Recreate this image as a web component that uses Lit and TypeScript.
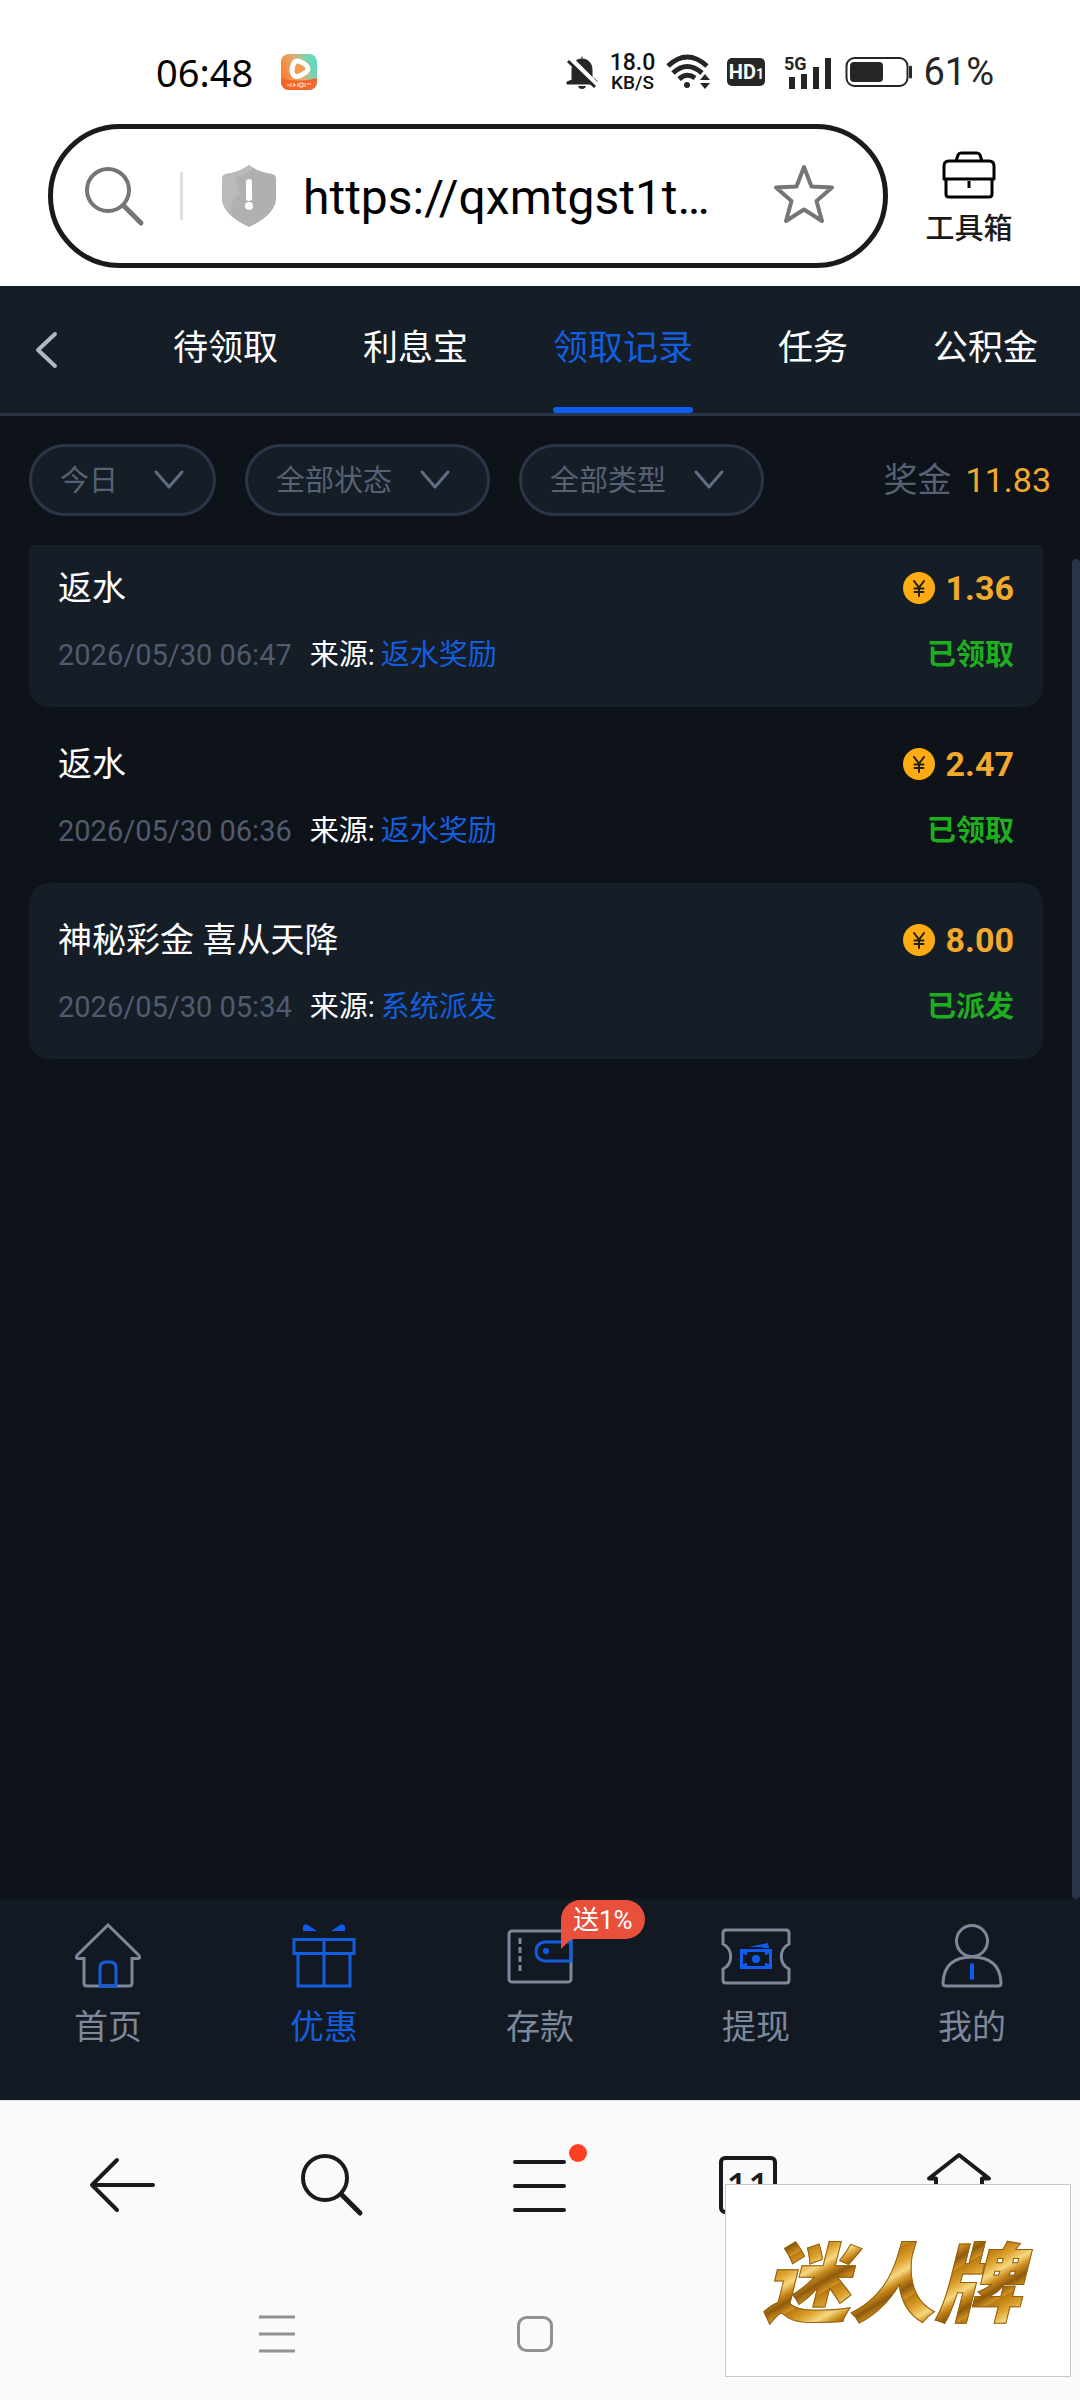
import { LitElement, html, svg, css, nothing } from "lit";
import { customElement, property, state } from "lit/decorators.js";
import { classMap } from "lit/directives/class-map.js";

const base = css`
  * {
    box-sizing: border-box;
  }
  button,
  input,
  select {
    margin: 0;
    padding: 0;
    border: 0;
    background: none;
    color: inherit;
    font: inherit;
  }
  button {
    cursor: pointer;
  }
  svg {
    display: block;
    flex: none;
    fill: none;
    overflow: visible;
  }
  ul {
    margin: 0;
    padding: 0;
    list-style: none;
  }
`;

@customElement("status-bar")
class StatusBar extends LitElement {
  static styles = [
    base,
    css`
      :host {
        display: flex;
        align-items: center;
        justify-content: space-between;
        padding: 48px 86px 28px 156px;
        height: 124px;
        box-sizing: border-box;
        color: #000;
      }
      .left,
      .right {
        display: flex;
        align-items: center;
      }
      .left {
        gap: 28px;
      }
      .right {
        gap: 10px;
        color: #262626;
      }
      .time {
        font: 38px/48px "Noto Sans", sans-serif;
      }
      .speed {
        display: flex;
        flex-direction: column;
        align-items: center;
        width: 50px;
        font-weight: 500;
        color: #111;
      }
      .rate {
        font-size: 23px;
        line-height: 21px;
      }
      .unit {
        font-size: 19px;
        line-height: 19px;
      }
      .hd {
        display: flex;
        align-items: baseline;
        justify-content: center;
        width: 38px;
        height: 28px;
        border-radius: 5px;
        background: #262626;
        color: #fff;
        font: bold 20px/28px Roboto, sans-serif;
      }
      .sim {
        font-size: 14px;
      }
      .percent {
        font-size: 38px;
        line-height: 48px;
      }
      .net {
        font: bold 18px Roboto, sans-serif;
      }
    `,
  ];

  render() {
    return html`
      <div class="left">
        <span class="time">06:48</span>
        <svg width="36" height="36" viewBox="0 0 36 36">
          <defs>
            <linearGradient id="app" x1="0" y1="0.6" x2="1" y2="0.2">
              <stop offset="0" stop-color="#ff7a30" />
              <stop offset="0.5" stop-color="#e0b070" />
              <stop offset="0.8" stop-color="#6fd6b4" />
              <stop offset="1" stop-color="#5fd8c0" />
            </linearGradient>
            <clipPath id="round"><rect width="36" height="36" rx="8" /></clipPath>
          </defs>
          <g clip-path="url(#round)">
            <rect width="36" height="36" fill="url(#app)" />
            <path d="M0 24Q18 29 36 24V36H0Z" fill="#f4672a" />
          </g>
          <path d="M13 9Q15 6 19 7.500Q27 11 27 15Q27 18 18 22Q12 24 11 17Q11 12 13 9Z" stroke="#fff" stroke-width="5" fill="#f09a50" stroke-linejoin="round" />
          <path d="M6 31h3m1-2v4m3-4v4m-1-2h3m2-2v4m2-4h3v4h-3zm5 0v4m2-3h4" stroke="#ffe6d6" stroke-width="1" />
        </svg>
      </div>
      <div class="right">
        <svg width="30" height="34" viewBox="0 0 30 34">
          <path d="M15 1.500v3M5 25V15C5 8 9 4 15 4s10 4 10 11v7l5 4v3H0v-2z" fill="#262626" stroke="#262626" />
          <path d="M11 31h8q-1 3-4 3t-4-3z" fill="#262626" />
          <path d="M3 3L31 31" stroke="#fff" stroke-width="5" />
          <path d="M1 6L28 32" stroke="#262626" stroke-width="3" />
        </svg>
        <div class="speed"><span class="rate">18.0</span><span class="unit">KB/S</span></div>
        <svg width="50" height="36" viewBox="0 0 50 36" stroke="#262626" stroke-width="5">
          <path d="M1 12Q20-6 40 12M6 19Q20 6 35 19M12 25Q20 18 28 24" />
          <circle cx="20" cy="31" r="3" fill="#262626" stroke="none" />
          <path d="M33 26l5-6 5 6zM33 29h10l-5 6z" fill="#262626" stroke="none" />
        </svg>
        <span class="hd">HD<span class="sim">1</span></span>
        <svg width="60" height="36" viewBox="-8 0 60 36">
          <text class="net" x="1" y="16" fill="#262626">5G</text>
          <path d="M9 23v12M21 20v15M33 13v22M45 4v31" stroke="#262626" stroke-width="6" />
        </svg>
        <svg width="68" height="32" viewBox="0 0 68 32">
          <rect x="1.500" y="2" width="61" height="28" rx="8" stroke="#262626" stroke-width="2" />
          <rect x="5" y="6" width="33" height="20" rx="4" fill="#262626" />
          <path d="M65.500 11v10" stroke="#262626" stroke-width="3" stroke-linecap="round" />
        </svg>
        <span class="percent">61%</span>
      </div>
    `;
  }
}

@customElement("address-bar")
class AddressBar extends LitElement {
  static styles = [
    base,
    css`
      :host {
        display: flex;
        align-items: center;
        padding: 0 56px 18px 48px;
        gap: 26px;
      }
      .box {
        flex: 1;
        min-width: 0;
        display: flex;
        align-items: center;
        height: 144px;
        padding: 0 48px 0 32px;
        border: 5px solid #1a1a1a;
        border-radius: 72px;
      }
      .divider {
        width: 3px;
        height: 48px;
        margin: 0 39px 0 37px;
        background: #e0e0e0;
      }
      .url {
        flex: 1;
        min-width: 0;
        margin-left: 27px;
        height: 64px;
        padding-top: 2px;
        font-size: 48px;
        line-height: 62px;
        color: #000;
        outline: none;
      }
      .tools {
        display: flex;
        flex-direction: column;
        align-items: center;
        width: 110px;
        gap: 12px;
        padding-top: 6px;
        font-size: 29px;
        line-height: 36px;
        font-weight: 500;
        color: #1a1a1a;
      }
    `,
  ];

  render() {
    return html`
      <div class="box">
        <svg width="58" height="60" viewBox="0 0 58 60" stroke="#757575" stroke-linecap="round">
          <circle cx="23" cy="24" r="21" stroke-width="4" />
          <path d="M39 40L56 57" stroke-width="5" />
        </svg>
        <span class="divider"></span>
        <svg width="54" height="62" viewBox="0 0 54 62">
          <path d="M27 0Q36 7 50 9Q54 10 54 14V34Q53 50 27 62Q1 50 0 34V14Q0 10 4 9Q18 7 27 0Z" fill="#b0b0b0" />
          <path d="M13 12Q26 9 31 3L27 0Q18 7 4 9Q0 10 0 14V34Q2 45 10 51Q6 36 18 30Z" fill="#bababa" />
          <path d="M27 17v16" stroke="#fff" stroke-width="6" stroke-linecap="round" />
          <circle cx="27" cy="41" r="4" fill="#fff" />
        </svg>
        <input class="url" type="text" aria-label="URL" .value=${"https://qxmtgst1t…"} />
        <svg width="62" height="62" viewBox="0 0 62 62" stroke="#757575" stroke-width="4" stroke-linejoin="round">
          <path d="M31 2L38.500 21.500L59 22.500L43.500 36L49 56L31 44.500L13 56L18.500 36L3 22.500L23.500 21.500Z" />
        </svg>
      </div>
      <button class="tools">
        <svg width="54" height="48" viewBox="0 0 54 48" stroke="#000" stroke-width="3" stroke-linejoin="round">
          <path d="M14 10L16 4Q17 2 19 2H35Q37 2 38 4L40 10M7 10H47Q52 10 52 15V28H2V15Q2 10 7 10ZM4 28V43Q4 46 7 46H47Q50 46 50 43V28M27 30v7" />
        </svg>
        工具箱
      </button>
    `;
  }
}

@customElement("record-tabs")
class RecordTabs extends LitElement {
  static styles = [
    base,
    css`
      :host {
        display: flex;
        background: #151d27;
        border-bottom: 3px solid #2a3648;
      }
      .back {
        display: flex;
        align-items: center;
        width: 173px;
        padding-left: 35px;
      }
      .tabs {
        flex: 1;
        display: flex;
        justify-content: space-between;
        padding-right: 42px;
      }
      .tab {
        display: flex;
        flex-direction: column;
        padding-top: 5px;
        color: #fff;
        font-size: 35px;
        line-height: 116px;
      }
      .tab::after {
        content: "";
        height: 6px;
        border-radius: 3px;
      }
      .active {
        color: #135edf;
      }
      .active::after {
        background: #0f5df0;
      }
    `,
  ];

  @state() private active = "领取记录";

  render() {
    return html`
      <button class="back" aria-label="返回">
        <svg width="24" height="38" viewBox="0 0 24 38" stroke="#b0b7c9" stroke-width="4" stroke-linecap="round" stroke-linejoin="round">
          <path d="M20 3L3 19L20 35" />
        </svg>
      </button>
      <nav class="tabs">
        ${["待领取", "利息宝", "领取记录", "任务", "公积金"].map(
          (name) => html`<button class=${classMap({ tab: true, active: name === this.active })} @click=${() => (this.active = name)}>
            <span>${name}</span>
          </button>`
        )}
      </nav>
    `;
  }
}

@customElement("record-filters")
class RecordFilters extends LitElement {
  static styles = [
    base,
    css`
      :host {
        display: flex;
        align-items: center;
        gap: 29px;
        padding: 28px 29px 29px;
        color: #566174;
      }
      .pill {
        display: flex;
        align-items: center;
        gap: 27px;
        height: 72px;
        padding: 0 37px 0 28px;
        border: 3px solid #2a3648;
        border-radius: 36px;
        background: #151d27;
      }
      .compact {
        gap: 35px;
        padding-right: 29px;
      }
      .choice {
        appearance: none;
        padding-top: 2px;
        font-size: 29px;
        line-height: 40px;
        outline: none;
      }
      .bonus {
        display: flex;
        gap: 14px;
        margin-left: auto;
        font-size: 34px;
        line-height: 48px;
      }
      .sum {
        color: #f3a92c;
      }
    `,
  ];

  render() {
    return html`
      ${["今日", "全部状态", "全部类型"].map(
        (name) => html`<label class=${classMap({ pill: true, compact: name.length < 3 })}>
          <select class="choice" aria-label=${name}>
            <option>${name}</option>
          </select>
          <svg width="30" height="20" viewBox="0 0 30 20" stroke="#616d82" stroke-width="3" stroke-linecap="round" stroke-linejoin="round">
            <path d="M2 2L15 17L28 2" />
          </svg>
        </label>`
      )}
      <div class="bonus"><span>奖金</span><span class="sum">11.83</span></div>
    `;
  }
}

interface RewardRecord {
  title: string;
  time: string;
  source: string;
  amount: string;
  status: string;
}

const records: RewardRecord[] = [
  { title: "返水", time: "2026/05/30 06:47", source: "返水奖励", amount: "1.36", status: "已领取" },
  { title: "返水", time: "2026/05/30 06:36", source: "返水奖励", amount: "2.47", status: "已领取" },
  { title: "神秘彩金 喜从天降", time: "2026/05/30 05:34", source: "系统派发", amount: "8.00", status: "已派发" },
];

@customElement("record-list")
class RecordList extends LitElement {
  static styles = [
    base,
    css`
      :host {
        display: flex;
        overflow: hidden;
        padding-left: 29px;
      }
      /* The list is scrolled slightly under the filter row. */
      .list {
        flex: 1;
        margin: -14px 29px 0 0;
      }
      .card {
        display: flex;
        flex-direction: column;
        gap: 22px;
        padding: 33px 29px 31px;
        border-radius: 20px;
      }
      .card:nth-child(odd) {
        background: #151d27;
      }
      .row {
        display: flex;
        align-items: center;
        justify-content: space-between;
      }
      .main {
        font-size: 34px;
        line-height: 48px;
        color: #fff;
      }
      .sub {
        font-size: 29px;
        line-height: 42px;
      }
      .amount {
        display: flex;
        align-items: center;
        gap: 11px;
        color: #f3a92c;
        font-weight: bold;
      }
      .meta {
        display: flex;
      }
      .time {
        margin-right: 18px;
        color: #515b6e;
      }
      .label {
        margin-right: 6px;
        color: #fff;
      }
      .source {
        color: #135edf;
        text-decoration: none;
      }
      .status {
        color: #1eae1e;
        font-weight: bold;
      }
      .thumb {
        width: 8px;
        margin-top: 14px;
        border-radius: 4px;
        background: #283548;
      }
    `,
  ];

  render() {
    return html`
      <ul class="list">
        ${records.map(
          (r) => html`<li class="card">
            <div class="row main">
              <span>${r.title}</span>
              <span class="amount">
                <svg width="32" height="32" viewBox="0 0 32 32">
                  <circle cx="16" cy="16" r="16" fill="#ffab12" />
                  <path d="M11 9L16 15.500L21 9M16 15.500V24M11.500 16.500H20.500M11.500 20H20.500" stroke="#20201c" stroke-width="2" stroke-linecap="round" />
                </svg>
                ${r.amount}
              </span>
            </div>
            <div class="row sub">
              <span class="meta">
                <span class="time">${r.time}</span><span class="label">来源:</span><a class="source" href="#">${r.source}</a>
              </span>
              <span class="status">${r.status}</span>
            </div>
          </li>`
        )}
      </ul>
      <div class="thumb"></div>
    `;
  }
}

const navItems = [
  {
    label: "首页",
    icon: svg`<path d="M37 4L68 34.500Q70 38 66 37.500H61V62Q61 65 58 65H16Q13 65 13 62V37.500H8Q4 38 6 34.500Z" stroke="#7d889b" />
      <path d="M29 65V47Q29 41 35 41H39Q45 41 45 47V65Z" stroke="#135edf" />`,
  },
  {
    label: "优惠",
    active: true,
    icon: svg`<path d="M16 10V6Q17 2 21 4L30 10ZM58 10V6Q57 2 53 4L44 10Z" fill="#0f5df0" stroke="none" />
      <path d="M7 18.500H67V32.500H7ZM11 32.500V65H63V32.500M37 18.500V65" stroke="#135edf" />`,
  },
  {
    label: "存款",
    badge: "送1%",
    icon: svg`<rect x="6" y="10" width="62" height="51" rx="3" stroke="#7d889b" />
      <path d="M17 17v35" stroke="#7d889b" stroke-dasharray="6 3" />
      <path d="M68 21H42Q33 22 33 30.500Q33 39 42 40H68Z" stroke="#135edf" />
      <circle cx="43" cy="30" r="3" fill="#0f5df0" stroke="none" />`,
  },
  {
    label: "提现",
    icon: svg`<path d="M7 9H67Q70 9 70 12V23A14 14 0 0 0 70 48V59Q70 62 67 62H7Q4 62 4 59V48A14 14 0 0 0 4 23V12Q4 9 7 9Z" stroke="#7d889b" />
      <rect x="22.500" y="29.500" width="29" height="17" stroke="#0f5df0" />
      <circle cx="37" cy="38" r="4" fill="#0f5df0" stroke="none" />
      <path d="M30 26L49 22L50 27H44L43 26Z" fill="#0f5df0" stroke="none" />
      <path d="M24 31l4 2M50 31l-4 2M24 45l4-2M50 45l-4-2" stroke="#0f5df0" />`,
  },
  {
    label: "我的",
    icon: svg`<circle cx="37" cy="20" r="15.500" stroke="#7d889b" />
      <path d="M8 62Q9 36 37 36Q65 36 66 62Q66 65 63 65H11Q8 65 8 62Z" stroke="#7d889b" />
      <path d="M37 44V57" stroke="#0f5df0" stroke-width="4" stroke-linecap="round" />`,
  },
];

@customElement("site-nav")
class SiteNav extends LitElement {
  static styles = [
    base,
    css`
      :host {
        display: grid;
        grid-template-columns: repeat(5, 1fr);
        background: #121922;
        color: #7d889b;
      }
      .item {
        position: relative;
        display: flex;
        flex-direction: column;
        align-items: center;
        gap: 11px;
        padding: 22px 0 49px;
        font-size: 34px;
        line-height: 48px;
      }
      .active {
        color: #135edf;
      }
      .badge {
        position: absolute;
        top: 1px;
        left: calc(50% + 21px);
        padding: 1px 12px 0;
        border-radius: 20px 20px 20px 0;
        background: #e8503c;
        color: #fff;
        font-size: 26px;
        line-height: 38px;
      }
      .badge::after {
        content: "";
        position: absolute;
        left: 0;
        top: 38px;
        border-top: 11px solid #e8503c;
        border-right: 11px solid transparent;
      }
    `,
  ];

  render() {
    return navItems.map(
      (item) => html`<button class=${classMap({ item: true, active: !!item.active })}>
        <svg width="74" height="71" viewBox="0 0 74 71" stroke-width="3">${item.icon}</svg>
        <span>${item.label}</span>
        ${item.badge ? html`<span class="badge">${item.badge}</span>` : nothing}
      </button>`
    );
  }
}

@customElement("browser-bar")
class BrowserBar extends LitElement {
  static styles = [
    base,
    css`
      :host {
        display: block;
        background: #fafafa;
        border-top: 1px solid #e0e0e0;
      }
      .tools {
        display: grid;
        grid-template-columns: repeat(5, 1fr);
        padding: 45px 18px 0;
      }
      .system {
        display: grid;
        grid-template-columns: repeat(3, 1fr);
        padding: 88px 158px 46px 148px;
      }
      .key {
        display: flex;
        justify-content: center;
      }
      .count {
        font: 500 38px "Noto Sans", sans-serif;
      }
    `,
  ];

  private tool(label: string, shape: unknown) {
    return html`<button class="key" aria-label=${label}>
      <svg width="84" height="80" viewBox="0 0 84 80" stroke="#1a1a1a" stroke-width="4" stroke-linecap="round" stroke-linejoin="round">${shape}</svg>
    </button>`;
  }

  render() {
    return html`
      <div class="tools">
        ${this.tool("后退", svg`<path d="M73 39H12M37 14L12 39L37 64" />`)}
        ${this.tool("搜索", svg`<circle cx="36" cy="32" r="22" /><path d="M53 49L71 67" stroke-width="5" />`)}
        ${this.tool("菜单", svg`<path d="M17 16H66M17 40H66M17 64H66" /><circle cx="80" cy="7" r="9" fill="#ff4020" stroke="none" />`)}
        ${this.tool(
          "标签页",
          svg`<rect x="14" y="12" width="54" height="54" rx="4" />
            <text class="count" x="41" y="54" text-anchor="middle" fill="#1a1a1a" stroke="none">11</text>`
        )}
        ${this.tool("主页", svg`<path d="M43 9L73 32.500H66V64H20V32.500H13Z" />`)}
      </div>
      <div class="system">
        <button class="key" aria-label="最近任务">
          <svg width="36" height="40" viewBox="0 0 36 40" stroke="#919191" stroke-width="3"><path d="M0 3H36M0 20H36M0 37H36" /></svg>
        </button>
        <button class="key" aria-label="桌面">
          <svg width="36" height="40" viewBox="0 0 36 40" stroke="#919191" stroke-width="3"><rect x="1.500" y="3.500" width="33" height="33" rx="8" /></svg>
        </button>
      </div>
    `;
  }
}

@customElement("brand-mark")
class BrandMark extends LitElement {
  @property() name = "";

  static styles = [
    base,
    css`
      :host {
        display: flex;
        align-items: center;
        justify-content: center;
        box-sizing: border-box;
        padding: 0 0 6px 8px;
        border: 1px solid #c8c8c8;
        background: #fff;
      }
      .name {
        padding-right: 20px;
        font: italic 900 86px/120px "Noto Sans CJK SC", sans-serif;
        color: transparent;
        -webkit-text-stroke: 1px #94600f;
        background: repeating-linear-gradient(
          150deg,
          #b9780f 0,
          #dda22e 12px,
          #f6d880 22px,
          #c98a1c 30px,
          #8f5a0c 38px,
          #d39522 47px
        );
        -webkit-background-clip: text;
        background-clip: text;
      }
    `,
  ];

  render() {
    return html`<span class="name">${this.name}</span>`;
  }
}

@customElement("app-root")
class AppRoot extends LitElement {
  static styles = [
    base,
    css`
      :host {
        position: relative;
        display: flex;
        flex-direction: column;
        min-height: 100vh;
        background: #fff;
        font-family: Roboto, "Noto Sans CJK SC", sans-serif;
      }
      .page {
        flex: 1;
        display: flex;
        flex-direction: column;
        background: #0e1219;
      }
      .records {
        flex: 1;
      }
      .brand {
        position: absolute;
        right: 9px;
        bottom: 23px;
        width: 346px;
        height: 193px;
      }
    `,
  ];

  render() {
    return html`
      <status-bar></status-bar>
      <address-bar></address-bar>
      <main class="page">
        <record-tabs></record-tabs>
        <record-filters></record-filters>
        <record-list class="records"></record-list>
        <site-nav></site-nav>
      </main>
      <browser-bar></browser-bar>
      <brand-mark class="brand" name="迷人牌"></brand-mark>
    `;
  }
}
